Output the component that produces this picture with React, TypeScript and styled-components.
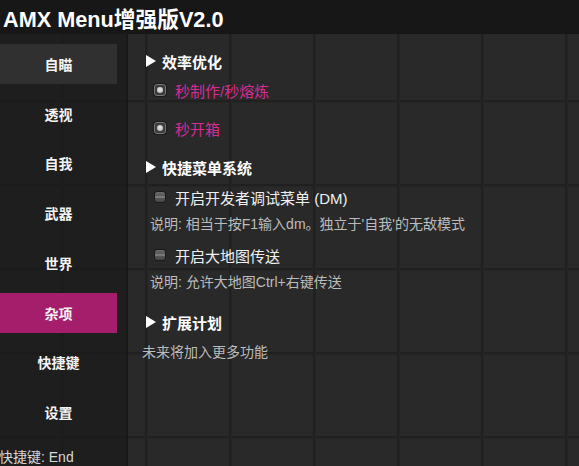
import React from 'react';
import styled, { createGlobalStyle } from 'styled-components';

const GlobalStyle = createGlobalStyle`
  html, body {
    margin: 0;
    padding: 0;
    background: #282828;
  }

  body {
    font-family: 'Liberation Sans', 'Noto Sans CJK SC', sans-serif;
    color: #f2f2f2;
    overflow: hidden;
  }
`;

// window backdrop: dark tiles separated by thin seams, 84px apart
const Window = styled.div`
  width: 100vw;
  height: 100vh;
  display: flex;
  flex-direction: column;
  background-color: #292929;
  background-image:
    linear-gradient(90deg, #202020 0, #202020 2px, #252525 2px, #252525 3px, transparent 3px),
    linear-gradient(180deg, #202020 0, #202020 2px, #252525 2px, #252525 3px, transparent 3px);
  background-size: 84px 84px;
  background-position: 61px 16px;
`;

const TitleBar = styled.div`
  height: 34px;
  flex-shrink: 0;
  display: flex;
  align-items: center;
  padding-left: 3px;
  background: rgba(22, 22, 22, 0.92);
  font-size: 21.7px;
  font-weight: 700;
  color: #ffffff;
  white-space: nowrap;
`;

const Body = styled.div`
  flex: 1;
  display: flex;
  min-height: 0;
`;

const Sidebar = styled.nav`
  width: 126px;
  flex-shrink: 0;
  display: flex;
  flex-direction: column;
  gap: 10px;
  padding-top: 10px;
  background: rgba(24, 24, 24, 0.62);
  border-right: 2px solid rgba(20, 20, 20, 0.6);
`;

const NavButton = styled.div<{ $active?: boolean; $hover?: boolean }>`
  width: 117px;
  height: 40px;
  display: flex;
  align-items: center;
  justify-content: center;
  font-size: 14px;
  font-weight: 700;
  color: #f4f4f4;
  background: ${p => (p.$active ? '#a51e6b' : p.$hover ? '#303030' : 'transparent')};
`;

const Hotkey = styled.div`
  margin-top: 4px;
  margin-left: -1px;
  font-size: 14px;
  color: #d6d6d6;
  white-space: nowrap;
`;

const Content = styled.main`
  flex: 1;
  display: flex;
  flex-direction: column;
  padding: 16px 0 0 18px;
`;

const SectionTitle = styled.div<{ $space?: number }>`
  height: 22px;
  margin-top: ${p => p.$space ?? 0}px;
  display: flex;
  align-items: center;
  gap: 6px;
  font-size: 15px;
  font-weight: 700;
  color: #ffffff;

  &::before {
    content: '';
    width: 0;
    height: 0;
    border-left: 10px solid #ffffff;
    border-top: 6px solid transparent;
    border-bottom: 6px solid transparent;
  }
`;

const Option = styled.div<{ $space?: number; $accent?: boolean }>`
  height: 22px;
  margin-top: ${p => p.$space ?? 0}px;
  margin-left: 8px;
  display: flex;
  align-items: center;
  gap: 9px;
  font-size: 15px;
  color: ${p => (p.$accent ? '#d42d95' : '#f0f0f0')};
`;

const Check = styled.span<{ $on?: boolean }>`
  width: 12px;
  height: 12px;
  border-radius: 3px;
  box-sizing: border-box;
  display: flex;
  align-items: center;
  justify-content: center;
  border: 1px solid ${p => (p.$on ? '#777777' : '#1a1a1a')};
  background: ${p =>
    p.$on
      ? '#3c3c3c'
      : 'linear-gradient(180deg, #6a6a6a 0%, #5a5a5a 35%, #8a8a8a 50%, #555555 65%, #444444 100%)'};
  box-shadow: ${p => (p.$on ? '0 0 0 1px #1a1a1a' : 'none')};

  &::after {
    content: '';
    display: ${p => (p.$on ? 'block' : 'none')};
    width: 6px;
    height: 6px;
    border-radius: 50%;
    background: radial-gradient(circle at 50% 40%, #e6e6e6 0%, #c2c2c2 70%, #a0a0a0 100%);
  }
`;

const Note = styled.div<{ $space?: number; $indent?: number }>`
  height: 20px;
  line-height: 20px;
  margin-top: ${p => p.$space ?? 0}px;
  margin-left: ${p => p.$indent ?? 0}px;
  font-size: 14px;
  color: #bcbcbc;
  white-space: nowrap;
`;

const tabs = ['自瞄', '透视', '自我', '武器', '世界', '杂项', '快捷键', '设置'];

export default function App() {
  return (
    <>
      <GlobalStyle />
      <Window>
        <TitleBar>AMX Menu增强版V2.0</TitleBar>
        <Body>
          <Sidebar>
            {tabs.map(t => (
              <NavButton key={t} $active={t === '杂项'} $hover={t === '自瞄'}>
                {t}
              </NavButton>
            ))}
            <Hotkey>快捷键: End</Hotkey>
          </Sidebar>
          <Content>
            <SectionTitle>效率优化</SectionTitle>
            <Option $space={7} $accent>
              <Check $on />
              秒制作/秒熔炼
            </Option>
            <Option $space={16} $accent>
              <Check $on />
              秒开箱
            </Option>

            <SectionTitle $space={17}>快捷菜单系统</SectionTitle>
            <Option $space={8}>
              <Check />
              开启开发者调试菜单 (DM)
            </Option>
            <Note $space={6} $indent={4}>说明: 相当于按F1输入dm。独立于'自我'的无敌模式</Note>
            <Option $space={10}>
              <Check />
              开启大地图传送
            </Option>
            <Note $space={6} $indent={4}>说明: 允许大地图Ctrl+右键传送</Note>

            <SectionTitle $space={19}>扩展计划</SectionTitle>
            <Note $space={9} $indent={-4}>未来将加入更多功能</Note>
          </Content>
        </Body>
      </Window>
    </>
  );
}
